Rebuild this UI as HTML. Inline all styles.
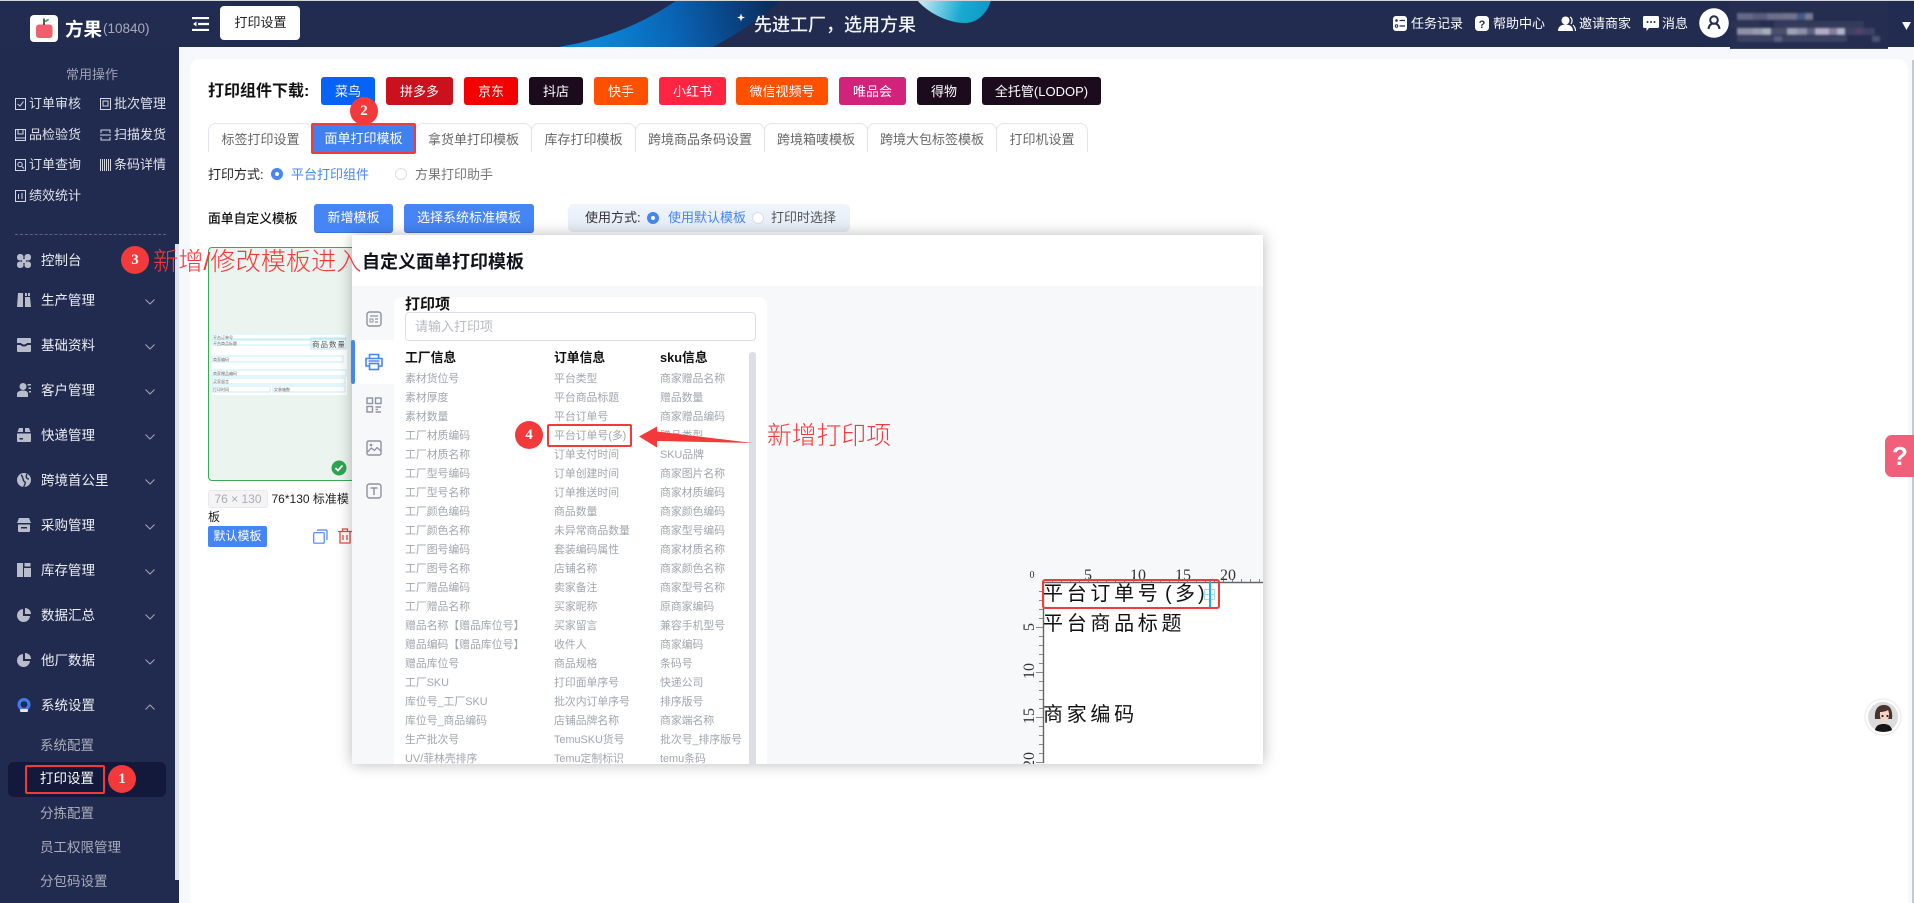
<!DOCTYPE html>
<html lang="zh-CN"><head><meta charset="utf-8"><title>打印设置</title>
<style>
html,body{margin:0;padding:0}
body{position:relative;width:1914px;height:903px;overflow:hidden;background:#f6f8fc;font-family:"Liberation Sans","Noto Sans CJK SC",sans-serif;font-size:13px;color:#333}
div,span,svg{box-sizing:border-box}
.a,svg.a{position:absolute}
.t{position:absolute;line-height:20px;white-space:nowrap}
.b{position:absolute;top:77px;height:28px;border-radius:3px;color:#fff;text-align:center;line-height:29px;font-size:13px}
.tab{position:absolute;top:123px;height:29px;border:1px solid #e2e5ec;border-bottom:none;border-radius:8px 8px 0 0;color:#666;text-align:center;line-height:32px;background:#fff}
.s{color:#dfe1e8;font-size:13px}
.m{color:#eceef3;font-size:13.5px;left:41px}
.sub{color:#a9adba;font-size:13.5px;left:40px}
.chev{position:absolute;left:145px;width:10px;height:6px}
.ico{position:absolute;left:17px;width:14px;height:14px}
.cir{position:absolute;width:28px;height:28px;border-radius:50%;background:#f33a3a;color:#fff;text-align:center;line-height:28px;font:bold 15px/28px "Liberation Serif",serif}
.col{position:absolute;top:370.2px;height:393.8px;overflow:hidden;font-size:10.85px;line-height:18.98px;color:#a1a5ae;white-space:nowrap}
.red{color:#f8383c;font-weight:300}
.rbtn{position:absolute;top:204px;height:28px;background:#4585f5;color:#fff;border-radius:3px;text-align:center;line-height:28px;box-shadow:0 1px 0 #3d74d8}
.radio{position:absolute;width:12px;height:12px;border-radius:50%}
.on{background:#fff;border:4px solid #4585f5}
.off{background:#fff;border:1px solid #dcdfe6}
.lab{position:absolute;font:20px/24px "Liberation Sans","Noto Sans CJK SC",sans-serif;color:#111;letter-spacing:3.7px;white-space:nowrap}
</style></head><body>

<!-- top bar -->
<div class="a" style="left:0;top:0;width:1914px;height:47px;background:#222c50;border-top:1px solid #d5d6da"></div>
<svg class="a" style="left:540px;top:1px" width="480" height="46" viewBox="540 1 480 46">
<defs><linearGradient id="g1" x1="600" y1="47" x2="770" y2="0" gradientUnits="userSpaceOnUse"><stop offset="0" stop-color="#0b86d8"/><stop offset=".45" stop-color="#0a63b4"/><stop offset="1" stop-color="#0b2c5e"/></linearGradient>
<linearGradient id="g2" x1="917" y1="0" x2="990" y2="20" gradientUnits="userSpaceOnUse"><stop offset="0" stop-color="#d2eef6"/><stop offset=".6" stop-color="#19aad0"/><stop offset="1" stop-color="#0b98c4"/></linearGradient></defs>
<path d="M559 47C600 40 640 26 677 0L780 0C760 20 735 35 713 47Z" fill="url(#g1)"/>
<path d="M917 0C930 15 950 23 965 23C978 23 988 12 991 0Z" fill="url(#g2)"/>
<path d="M741 13.500L742 16.500L745 17.500L742 18.500L741 21.500L740 18.500L737 17.500L740 16.500Z" fill="#fff"/>
</svg>
<div class="t" style="left:754px;top:13px;line-height:24px;font-size:18px;font-weight:500;color:#f2f4f8">先进工厂，选用方果</div>

<svg class="a" style="left:30px;top:15px" width="28" height="27" viewBox="0 0 28 27"><rect width="28" height="27" rx="4" fill="#fff"/><rect x="6" y="9.500" width="16.500" height="13.500" rx="3" fill="#ef5f6c"/><path d="M14 3.500V10" stroke="#333" stroke-width="1.600"/><path d="M14.500 7C15 5 17 4 19 4C18.500 6 17 7 14.500 7Z" fill="#3aa655"/></svg>
<div class="t" style="left:65px;top:18px;line-height:24px;font-size:18.500px;font-weight:bold;color:#fff">方果</div>
<div class="t" style="left:103px;top:19px;line-height:20px;font-size:13.500px;color:#a7abb9">(10840)</div>

<svg class="a" style="left:192px;top:17px" width="17" height="14" viewBox="0 0 17 14"><path d="M0 1H17M6 7H17M0 13H17" stroke="#fff" stroke-width="2.200"/><path d="M4.500 4.500L1 7L4.500 9.500Z" fill="#fff"/></svg>
<div class="a" style="left:220px;top:6px;width:80px;height:34px;background:#fff;border-radius:4px;text-align:center;line-height:34px;color:#222;padding-left:1px">打印设置</div>

<svg class="a" style="left:1393px;top:16px" width="14" height="15" viewBox="0 0 14 15"><rect width="14" height="15" rx="3" fill="#fff"/><path d="M6.500 4.500H12M6.500 10H12" stroke="#222c50" stroke-width="1.200"/><circle cx="3.500" cy="4.500" r="1.300" fill="#222c50"/><circle cx="3.500" cy="10" r="1.300" fill="none" stroke="#222c50"/></svg>
<div class="t" style="left:1411px;top:14px;color:#fff">任务记录</div>
<svg class="a" style="left:1475px;top:16px" width="14" height="15" viewBox="0 0 14 15"><rect width="14" height="15" rx="3.500" fill="#fff"/><text x="7" y="12" text-anchor="middle" font-size="11" font-weight="bold" fill="#222c50" font-family="Liberation Sans,sans-serif">?</text></svg>
<div class="t" style="left:1493px;top:14px;color:#fff">帮助中心</div>
<svg class="a" style="left:1558px;top:16px" width="18" height="15" viewBox="0 0 18 15"><circle cx="7.500" cy="4.500" r="4" fill="#fff"/><path d="M0 15C0 10 4 8.500 7.500 8.500C11 8.500 15 10 15 15Z" fill="#fff"/><path d="M12 1C14 2 15 5 13 8M15 9C16.500 10.500 17.500 12.500 17.500 15" stroke="#fff" fill="none" stroke-width="1.200"/></svg>
<div class="t" style="left:1579px;top:14px;color:#fff">邀请商家</div>
<svg class="a" style="left:1643px;top:16px" width="16" height="15" viewBox="0 0 16 15"><path d="M1.500 0H14.500Q16 0 16 1.500V10.500Q16 12 14.500 12H6L3.500 15V12H1.500Q0 12 0 10.500V1.500Q0 0 1.500 0Z" fill="#fff"/><circle cx="4.500" cy="6" r="1" fill="#222c50"/><circle cx="8" cy="6" r="1" fill="#222c50"/><circle cx="11.500" cy="6" r="1" fill="#222c50"/></svg>
<div class="t" style="left:1662px;top:14px;color:#fff">消息</div>
<svg class="a" style="left:1699px;top:8px" width="30" height="30" viewBox="0 0 30 30"><circle cx="15" cy="15" r="14.800" fill="#fff"/><circle cx="15" cy="12" r="3.800" fill="none" stroke="#222c50" stroke-width="2"/><path d="M9.500 21C10 17 12 15.500 15 15.500C18 15.500 20 17 20.500 21" fill="none" stroke="#222c50" stroke-width="2"/></svg>

<div class="a" style="left:1730px;top:1px;width:158px;height:48px;background:#252e50;border-bottom:1px solid #3a4363;overflow:hidden">
<svg class="a" style="left:0;top:0;filter:blur(1px)" width="158" height="47" viewBox="0 0 158 47">
<rect x="7" y="12" width="16" height="7" fill="#66688a"/><rect x="23" y="12" width="14" height="7" fill="#5a5c7e"/><rect x="37" y="12" width="16" height="7" fill="#6c6e8a"/><rect x="53" y="12" width="14" height="7" fill="#72728c"/><rect x="67" y="12" width="8" height="7" fill="#43598a"/><rect x="75" y="12" width="8" height="7" fill="#7a7a90"/>
<rect y="20" width="30" height="7" fill="#2c3454"/><rect x="44" y="20" width="90" height="7" fill="#343b5a"/>
<rect x="7" y="27" width="16" height="7" fill="#8f90a5"/><rect x="23" y="27" width="10" height="7" fill="#9a9bae"/><rect x="33" y="27" width="8" height="7" fill="#a7b0bd"/><rect x="41" y="27" width="16" height="7" fill="#4a4f6c"/><rect x="57" y="27" width="10" height="7" fill="#9ea2b4"/><rect x="67" y="27" width="10" height="7" fill="#8d90a8"/><rect x="77" y="27" width="8" height="7" fill="#5d6180"/><rect x="85" y="27" width="14" height="7" fill="#b4aac6"/><rect x="99" y="27" width="8" height="7" fill="#8a7e9c"/><rect x="107" y="27" width="8" height="7" fill="#b0b5c8"/><rect x="115" y="27" width="30" height="7" fill="#3e4364"/><rect x="125" y="27" width="8" height="7" fill="#52406f"/>
<rect x="7" y="35" width="110" height="6" fill="#3c4262"/><rect x="44" y="35" width="8" height="6" fill="#5b6080"/><rect x="142" y="35" width="8" height="6" fill="#4c5272"/>
</svg></div>
<svg class="a" style="left:1902px;top:22px" width="9" height="8" viewBox="0 0 9 8"><path d="M0 0H9L4.500 8Z" fill="#fff"/></svg>

<!-- sidebar -->
<div class="a" style="left:0;top:47px;width:179px;height:856px;background:#212b50"></div>
<div class="a" style="left:175px;top:244px;width:4px;height:636px;background:#dfe2ea"></div>
<div class="t" style="left:66px;top:65px;color:#9da1b0">常用操作</div>

<svg class="a" style="left:15px;top:98px" width="11" height="12"><rect x=".5" y=".5" width="10" height="11" fill="none" stroke="#d5d7df"/><path d="M2.500 6L5 8L8.500 3.500" fill="none" stroke="#d5d7df"/></svg>
<div class="t s" style="left:29px;top:94px">订单审核</div>
<svg class="a" style="left:100px;top:98px" width="11" height="12"><rect x=".5" y=".5" width="10" height="11" fill="none" stroke="#d5d7df"/><rect x="3" y="3" width="5" height="5" fill="none" stroke="#d5d7df"/></svg>
<div class="t s" style="left:114px;top:94px">批次管理</div>
<svg class="a" style="left:15px;top:129px" width="11" height="12"><rect x=".5" y=".5" width="10" height="11" fill="none" stroke="#d5d7df"/><path d="M3 1V5H8V1M1 9H10" fill="none" stroke="#d5d7df"/></svg>
<div class="t s" style="left:29px;top:125px">品检验货</div>
<svg class="a" style="left:100px;top:129px" width="11" height="12"><path d="M1 4V1H10V4M1 8V11H10V8M0 6H11" fill="none" stroke="#d5d7df"/></svg>
<div class="t s" style="left:114px;top:125px">扫描发货</div>
<svg class="a" style="left:15px;top:159px" width="11" height="12"><rect x=".5" y=".5" width="10" height="11" fill="none" stroke="#d5d7df"/><circle cx="5" cy="5.500" r="2.200" fill="none" stroke="#d5d7df"/><path d="M7 7.500L9 9.500" stroke="#d5d7df"/></svg>
<div class="t s" style="left:29px;top:155px">订单查询</div>
<svg class="a" style="left:100px;top:159px" width="11" height="12"><path d="M.5 0V12M2.500 0V12M4.500 0V12M6.500 0V12M8.500 0V12M10.500 0V12" stroke="#d5d7df"/></svg>
<div class="t s" style="left:114px;top:155px">条码详情</div>
<svg class="a" style="left:15px;top:190px" width="11" height="12"><rect x=".5" y=".5" width="10" height="11" fill="none" stroke="#d5d7df"/><path d="M3.500 4V9M7 3V9" stroke="#d5d7df"/></svg>
<div class="t s" style="left:29px;top:186px">绩效统计</div>
<div class="a" style="left:15px;top:234px;width:151px;border-top:1px dashed #5c6480"></div>

<svg class="ico" style="top:254px" viewBox="0 0 14 14" fill="#b9bdc9"><rect x="0" y="0" width="6.500" height="6.500" rx="2.800"/><rect x="7.500" y="0" width="6.500" height="6.500" rx="2.800"/><rect x="0" y="7.500" width="6.500" height="6.500" rx="2.800"/><rect x="7.500" y="7.500" width="6.500" height="6.500" rx="2.800"/><rect x="5" y="5" width="4" height="4"/></svg>
<div class="t m" style="top:251px">控制台</div>
<svg class="ico" style="top:293px" viewBox="0 0 14 14" fill="#b9bdc9"><path d="M1 0H6V14H0ZM8 4H13L14 14H8ZM8 0H10V3H8ZM11 0H13V3H11Z"/></svg>
<div class="t m" style="top:291px">生产管理</div>
<svg class="ico" style="top:338px" viewBox="0 0 14 14" fill="#b9bdc9"><path d="M1 0H13Q14 0 14 1V5H10C9 7 5 7 4 5H0V1Q0 0 1 0ZM0 7H3.500C5 9 9 9 10.500 7H14V13Q14 14 13 14H1Q0 14 0 13Z"/></svg>
<div class="t m" style="top:336px">基础资料</div>
<svg class="ico" style="top:383px" viewBox="0 0 14 14" fill="#b9bdc9"><circle cx="6" cy="3.500" r="3.500"/><path d="M0 14V11C0 8.500 3 7.500 6 7.500C9 7.500 11 8.500 11 11V14ZM10.500 1H14V2.500H10.500ZM11.500 4.500H14V6H11.500ZM12 8H14V9.500H12Z"/></svg>
<div class="t m" style="top:381px">客户管理</div>
<svg class="ico" style="top:428px" viewBox="0 0 14 14" fill="#b9bdc9"><path d="M2 0H6V4H0.500ZM8 0H12L13.500 4H8ZM0 5.500H14V13Q14 14 13 14H1Q0 14 0 13Z"/><path d="M2.500 10H6V11.500H2.500Z" fill="#212b50"/></svg>
<div class="t m" style="top:426px">快递管理</div>
<svg class="ico" style="top:473px" viewBox="0 0 14 14"><circle cx="7" cy="7" r="7" fill="#b9bdc9"/><path d="M4 2C7 4 5 8 8 9C9 11 7 13 6.500 14M10 1C8.500 4 9.500 6 12 6" stroke="#212b50" stroke-width="1.400" fill="none"/></svg>
<div class="t m" style="top:471px">跨境首公里</div>
<svg class="ico" style="top:518px" viewBox="0 0 14 14" fill="#b9bdc9"><path d="M2 0H12L14 5H0ZM1 6.500H13V13Q13 14 12 14H2Q1 14 1 13Z"/><rect x="4" y="9" width="6" height="1.500" fill="#212b50"/></svg>
<div class="t m" style="top:516px">采购管理</div>
<svg class="ico" style="top:563px" viewBox="0 0 14 14" fill="#b9bdc9"><rect x="0" y="0" width="6" height="14"/><rect x="7" y="5" width="7" height="9"/><rect x="7.500" y="0" width="6" height="3.500"/></svg>
<div class="t m" style="top:561px">库存管理</div>
<svg class="ico" style="top:608px" viewBox="0 0 14 14" fill="#b9bdc9"><path d="M6 1A6.500 6.500 0 1 0 13 8H6Z"/><path d="M8 0A6 6 0 0 1 14 6H8Z"/></svg>
<div class="t m" style="top:606px">数据汇总</div>
<svg class="ico" style="top:653px" viewBox="0 0 14 14" fill="#b9bdc9"><path d="M6 1A6.500 6.500 0 1 0 13 8H6Z"/><path d="M8 0A6 6 0 0 1 14 6H8Z"/></svg>
<div class="t m" style="top:651px">他厂数据</div>
<svg class="ico" style="top:698px" viewBox="0 0 14 14"><circle cx="7" cy="6.500" r="6.500" fill="#3f7de8"/><circle cx="7" cy="6.500" r="3.400" fill="#212b50"/><rect x="3" y="11" width="8" height="3" rx="1" fill="#e5e8f0"/></svg>
<div class="t m" style="top:696px">系统设置</div>

<svg class="chev" style="top:299px" viewBox="0 0 10 6"><path d="M.5.500L5 5L9.500.5" fill="none" stroke="#a4a8b6"/></svg>
<svg class="chev" style="top:344px" viewBox="0 0 10 6"><path d="M.5.500L5 5L9.500.5" fill="none" stroke="#a4a8b6"/></svg>
<svg class="chev" style="top:389px" viewBox="0 0 10 6"><path d="M.5.500L5 5L9.500.5" fill="none" stroke="#a4a8b6"/></svg>
<svg class="chev" style="top:434px" viewBox="0 0 10 6"><path d="M.5.500L5 5L9.500.5" fill="none" stroke="#a4a8b6"/></svg>
<svg class="chev" style="top:479px" viewBox="0 0 10 6"><path d="M.5.500L5 5L9.500.5" fill="none" stroke="#a4a8b6"/></svg>
<svg class="chev" style="top:524px" viewBox="0 0 10 6"><path d="M.5.500L5 5L9.500.5" fill="none" stroke="#a4a8b6"/></svg>
<svg class="chev" style="top:569px" viewBox="0 0 10 6"><path d="M.5.500L5 5L9.500.5" fill="none" stroke="#a4a8b6"/></svg>
<svg class="chev" style="top:614px" viewBox="0 0 10 6"><path d="M.5.500L5 5L9.500.5" fill="none" stroke="#a4a8b6"/></svg>
<svg class="chev" style="top:659px" viewBox="0 0 10 6"><path d="M.5.500L5 5L9.500.5" fill="none" stroke="#a4a8b6"/></svg>
<svg class="chev" style="top:704px" viewBox="0 0 10 6"><path d="M.5 5.500L5 1L9.500 5.500" fill="none" stroke="#a4a8b6"/></svg>

<div class="t sub" style="top:736px">系统配置</div>
<div class="a" style="left:8px;top:762px;width:158px;height:35px;background:#12193a;border-radius:6px"></div>
<div class="t sub" style="top:769px;color:#fff">打印设置</div>
<div class="a" style="left:25px;top:765px;width:80px;height:29px;border:2px solid #f33a3a;border-radius:2px"></div>
<div class="cir" style="left:108px;top:765px">1</div>
<div class="t sub" style="top:804px">分拣配置</div>
<div class="t sub" style="top:838px">员工权限管理</div>
<div class="t sub" style="top:872px">分包码设置</div>

<!-- card -->
<div class="a" style="left:190px;top:59px;width:1718px;height:844px;background:#fff;border-radius:10px 10px 0 0"></div>
<div class="a" style="left:1912px;top:60px;width:2px;height:843px;background:#c6c8cf"></div>
<div class="t" style="left:208px;top:82px;font-size:16px;font-weight:bold;color:#111">打印组件下载:</div>
<div class="b" style="left:321px;width:54px;background:#0763f5">菜鸟</div>
<div class="b" style="left:386px;width:67px;background:#cc111e">拼多多</div>
<div class="b" style="left:464px;width:54px;background:#f40000">京东</div>
<div class="b" style="left:529px;width:54px;background:#1b0b1c">抖店</div>
<div class="b" style="left:594px;width:54px;background:#ff5000">快手</div>
<div class="b" style="left:659px;width:67px;background:#ff2442">小红书</div>
<div class="b" style="left:736px;width:92px;background:#ff5000">微信视频号</div>
<div class="b" style="left:839px;width:67px;background:#d2237c">唯品会</div>
<div class="b" style="left:917px;width:54px;background:#1b0b1c">得物</div>
<div class="b" style="left:982px;width:119px;background:#1b0b1c">全托管(LODOP)</div>

<div class="tab" style="left:208px;width:105px">标签打印设置</div>
<div class="tab" style="left:415px;width:117px">拿货单打印模板</div>
<div class="tab" style="left:531px;width:105px">库存打印模板</div>
<div class="tab" style="left:635px;width:130px">跨境商品条码设置</div>
<div class="tab" style="left:764px;width:104px">跨境箱唛模板</div>
<div class="tab" style="left:867px;width:130px">跨境大包标签模板</div>
<div class="tab" style="left:996px;width:92px">打印机设置</div>
<div class="a" style="left:311px;top:123px;width:105px;height:31px;background:#4080f0;border:2px solid #f33a3a;border-radius:2px;color:#fff;text-align:center;line-height:27px">面单打印模板</div>
<div class="cir" style="left:350px;top:97px">2</div>

<div class="t" style="left:208px;top:165px;color:#222">打印方式:</div>
<div class="radio on" style="left:271px;top:168px"></div>
<div class="t" style="left:291px;top:165px;color:#4585f5">平台打印组件</div>
<div class="radio off" style="left:395px;top:168px"></div>
<div class="t" style="left:415px;top:165px;color:#777">方果打印助手</div>

<div class="t" style="left:208px;top:209px;color:#111;font-size:12.800px;font-weight:500">面单自定义模板</div>
<div class="rbtn" style="left:314px;width:79px">新增模板</div>
<div class="rbtn" style="left:404px;width:130px">选择系统标准模板</div>
<div class="a" style="left:568px;top:204px;width:282px;height:28px;background:linear-gradient(#eff5fd,#e6ecf6);border-radius:5px"></div>
<div class="t" style="left:585px;top:208px;color:#333">使用方式:</div>
<div class="radio on" style="left:647px;top:212px"></div>
<div class="t" style="left:668px;top:208px;color:#4585f5">使用默认模板</div>
<div class="radio off" style="left:752px;top:212px"></div>
<div class="t" style="left:771px;top:208px;color:#555">打印时选择</div>

<!-- template card -->
<div class="a" style="left:208px;top:247px;width:150px;height:234px;background:#ebf4ee;border:1px solid #3aa956;border-radius:4px"></div>
<svg class="a" style="left:211px;top:333px" width="137" height="62" viewBox="0 0 137 62">
<rect width="136" height="62" fill="#fff"/>
<g fill="none" stroke="#c6eef8"><rect x="1" y="1" width="134" height="5"/><rect x="1" y="7" width="134" height="5"/><rect x="100" y="5" width="35" height="11" stroke="#b9e3f2"/><rect x="1" y="23" width="131" height="6"/><rect x="1" y="37" width="134" height="6"/><rect x="1" y="45" width="133" height="6"/><rect x="1" y="53" width="58" height="6"/><rect x="62" y="53" width="72" height="6"/></g>
<g font-size="4" fill="#666" font-family="Liberation Sans,Noto Sans CJK SC,sans-serif"><text x="2" y="6">平台订单号</text><text x="2" y="12">平台商品标题</text><text x="2" y="28">商家编码</text><text x="2" y="42">商家赠品编码</text><text x="2" y="50">买家留言</text><text x="2" y="58">打印时间</text><text x="63" y="58">实装箱数</text></g>
<text x="101" y="14" font-size="7.500" letter-spacing="1" fill="#555" font-family="Liberation Sans,Noto Sans CJK SC,sans-serif">商品数量</text></svg>
<svg class="a" style="left:331px;top:460px" width="16" height="16" viewBox="0 0 16 16"><circle cx="8" cy="8" r="7.500" fill="#2ea44f"/><path d="M4.500 8L7 10.500L11.500 5.500" fill="none" stroke="#fff" stroke-width="1.800"/></svg>
<div class="a" style="left:208px;top:490px;width:60px;height:18px;background:#f4f4f5;border:1px solid #e9e9eb;border-radius:3px;color:#a9acb3;font-size:12px;text-align:center;line-height:16px">76 × 130</div>
<div class="t" style="left:271.500px;top:489px;font-size:12px;color:#222">76*130 标准模</div>
<div class="t" style="left:208px;top:507px;font-size:12px;color:#222">板</div>
<div class="a" style="left:208px;top:526px;width:59px;height:21px;background:#4585f5;border-radius:2px;color:#fff;font-size:12px;text-align:center;line-height:21px">默认模板</div>
<svg class="a" style="left:313px;top:529px" width="15" height="15" viewBox="0 0 15 15"><rect x=".7" y="3.700" width="10.500" height="10.500" rx="1" fill="#fff" stroke="#4585f5" stroke-width="1.200"/><path d="M4 1H13Q14 1 14 2V11" fill="none" stroke="#4585f5" stroke-width="1.200"/></svg>
<svg class="a" style="left:338px;top:528px" width="14" height="16" viewBox="0 0 14 16"><path d="M0 3.500H14M4.500 3V1H9.500V3M2 4V15H12V4M5 7V12M9 7V12" fill="none" stroke="#e24a3c" stroke-width="1.300"/></svg>

<!-- modal -->
<div class="a" style="left:352px;top:235px;width:911px;height:529px;background:#f7f8fa;box-shadow:0 0 14px rgba(0,0,0,.28)"></div>
<div class="a" style="left:352px;top:235px;width:911px;height:51px;background:#fff"></div>
<div class="t" style="left:362px;top:250px;line-height:24px;font-size:18px;font-weight:bold;color:#12131c">自定义面单打印模板</div>
<div class="a" style="left:394px;top:297px;width:373px;height:467px;background:#fff;border-radius:8px 8px 0 0"></div>
<div class="a" style="left:355px;top:340px;width:39px;height:44px;background:#fff"></div>
<div class="a" style="left:351px;top:340px;width:4px;height:44px;background:#4585f5;border-radius:2px"></div>
<svg class="a" style="left:366px;top:311px" width="16" height="16" viewBox="0 0 16 16"><rect x="1" y="1" width="14" height="14" rx="2.500" fill="none" stroke="#8d93a3" stroke-width="1.400"/><path d="M4 5H12M9 8H12M9 11H12" stroke="#8d93a3" stroke-width="1.300"/><rect x="4" y="8" width="3" height="3" fill="none" stroke="#8d93a3"/></svg>
<svg class="a" style="left:365px;top:353px" width="18" height="18" viewBox="0 0 18 18"><path d="M4.500 5V1.500H13.500V5M4.500 13H1V5.500H17V13H13.500" fill="none" stroke="#4585f5" stroke-width="1.600"/><rect x="4.500" y="10.500" width="9" height="6" fill="none" stroke="#4585f5" stroke-width="1.600"/><path d="M3.500 8H14.500" stroke="#4585f5" stroke-width="1.400"/></svg>
<svg class="a" style="left:366px;top:397px" width="16" height="16" viewBox="0 0 16 16"><g fill="none" stroke="#8d93a3" stroke-width="1.400"><rect x="1" y="1" width="5.500" height="5.500"/><rect x="9.500" y="1" width="5.500" height="5.500"/><rect x="1" y="9.500" width="5.500" height="5.500"/><path d="M9.500 10H15M9.500 12.500H12M9.500 15H15"/></g></svg>
<svg class="a" style="left:366px;top:440px" width="16" height="16" viewBox="0 0 16 16"><rect x="1" y="1" width="14" height="14" rx="1.500" fill="none" stroke="#8d93a3" stroke-width="1.400"/><path d="M1.500 12L5.500 8L8.500 10.500L11 7.500L15 11" fill="none" stroke="#8d93a3" stroke-width="1.300"/><circle cx="5" cy="5" r="1.300" fill="#8d93a3"/></svg>
<svg class="a" style="left:366px;top:483px" width="16" height="16" viewBox="0 0 16 16"><rect x="1" y="1" width="14" height="14" rx="2.500" fill="none" stroke="#8d93a3" stroke-width="1.400"/><path d="M4.500 5H11.500M8 5V12" stroke="#8d93a3" stroke-width="1.500"/></svg>

<div class="t" style="left:405px;top:295px;font-size:15px;font-weight:bold;color:#111">打印项</div>
<div class="a" style="left:405px;top:312px;width:351px;height:29px;background:#fff;border:1px solid #dcdfe6;border-radius:4px;color:#b7bac1;line-height:27px;padding-left:9px">请输入打印项</div>
<div class="t" style="left:405px;top:348px;font-weight:bold;color:#111;font-size:12.800px">工厂信息</div>
<div class="t" style="left:554px;top:348px;font-weight:bold;color:#111;font-size:12.800px">订单信息</div>
<div class="t" style="left:660px;top:348px;font-weight:bold;color:#111;font-size:12.800px">sku信息</div>
<div class="a" style="left:749px;top:352px;width:7px;height:412px;background:#dcdfe8;border-radius:3px 3px 0 0"></div>

<div class="col" style="left:405px"><div>素材货位号</div><div>素材厚度</div><div>素材数量</div><div>工厂材质编码</div><div>工厂材质名称</div><div>工厂型号编码</div><div>工厂型号名称</div><div>工厂颜色编码</div><div>工厂颜色名称</div><div>工厂图号编码</div><div>工厂图号名称</div><div>工厂赠品编码</div><div>工厂赠品名称</div><div>赠品名称【赠品库位号】</div><div>赠品编码【赠品库位号】</div><div>赠品库位号</div><div>工厂SKU</div><div>库位号_工厂SKU</div><div>库位号_商品编码</div><div>生产批次号</div><div>UV/菲林壳排序</div></div>
<div class="col" style="left:554px"><div>平台类型</div><div>平台商品标题</div><div>平台订单号</div><div>平台订单号(多)</div><div>订单支付时间</div><div>订单创建时间</div><div>订单推送时间</div><div>商品数量</div><div>未异常商品数量</div><div>套装编码属性</div><div>店铺名称</div><div>卖家备注</div><div>买家昵称</div><div>买家留言</div><div>收件人</div><div>商品规格</div><div>打印面单序号</div><div>批次内订单序号</div><div>店铺品牌名称</div><div>TemuSKU货号</div><div>Temu定制标识</div></div>
<div class="col" style="left:660px"><div>商家赠品名称</div><div>赠品数量</div><div>商家赠品编码</div><div>赠品类型</div><div>SKU品牌</div><div>商家图片名称</div><div>商家材质编码</div><div>商家颜色编码</div><div>商家型号编码</div><div>商家材质名称</div><div>商家颜色名称</div><div>商家型号名称</div><div>原商家编码</div><div>兼容手机型号</div><div>商家编码</div><div>条码号</div><div>快递公司</div><div>排序版号</div><div>商家端名称</div><div>批次号_排序版号</div><div>temu条码</div></div>

<!-- annotation 4 -->
<div class="a" style="left:547px;top:424px;width:85px;height:23px;border:2px solid #f33a3a;border-radius:2px"></div>
<div class="cir" style="left:515px;top:421px">4</div>
<svg class="a" style="left:635px;top:420px" width="125" height="32" viewBox="635 420 125 32"><path d="M639 436.500L657 426.500L657 431.500L753 443L657 441L657 447.500Z" fill="#f33a3a"/></svg>
<div class="t red" style="left:767px;top:421.500px;line-height:30px;font-size:24.800px">新增打印项</div>

<!-- canvas / ruler -->
<div class="a" style="left:1043px;top:582px;width:220px;height:182px;background:#fff"></div>
<svg class="a" style="left:1020px;top:560px" width="243" height="204" viewBox="1020 560 243 204">
<g stroke="#8a8a8a" stroke-width="1"><path d="M1052.500 579V582M1061.500 579V582M1070.500 579V582M1079.500 579V582M1097.500 579V582M1106.500 579V582M1115.500 579V582M1124.500 579V582M1142.500 579V582M1151.500 579V582M1160.500 579V582M1169.500 579V582M1187.500 579V582M1196.500 579V582M1205.500 579V582M1214.500 579V582M1232.500 579V582M1241.500 579V582M1250.500 579V582M1259.500 579V582"/>
<path d="M1088.500 577V582M1133.500 577V582M1178.500 577V582M1223.500 577V582"/>
<path d="M1039 591.500H1043M1039 600.500H1043M1039 609.500H1043M1039 618.500H1043M1039 636.500H1043M1039 645.500H1043M1039 654.500H1043M1039 663.500H1043M1039 681.500H1043M1039 690.500H1043M1039 699.500H1043M1039 708.500H1043M1039 726.500H1043M1039 735.500H1043M1039 744.500H1043M1039 753.500H1043"/>
<path d="M1036 627.500H1043M1036 672.500H1043M1036 717.500H1043M1036 762.500H1043"/></g>
<path d="M1043.500 763V582.500H1263" fill="none" stroke="#666" stroke-width="1.400"/>
<g font-family="Liberation Serif,serif" fill="#333" text-anchor="middle"><text x="1032" y="578" font-size="10">0</text><text x="1088" y="580" font-size="16">5</text><text x="1138" y="580" font-size="16">10</text><text x="1183" y="580" font-size="16">15</text><text x="1228" y="580" font-size="16">20</text>
<text transform="translate(1034 627) rotate(-90)" font-size="16">5</text><text transform="translate(1034 671) rotate(-90)" font-size="16">10</text><text transform="translate(1034 716) rotate(-90)" font-size="16">15</text><text transform="translate(1034 760) rotate(-90)" font-size="16">20</text></g>
</svg>
<div class="lab" style="left:1043px;top:582px">平台订单号</div>
<div class="lab" style="left:1165px;top:582px;letter-spacing:0;font-weight:300">(</div>
<div class="lab" style="left:1175px;top:582px;letter-spacing:0">多</div>
<div class="lab" style="left:1198px;top:582px;letter-spacing:0;font-weight:300">)</div>
<div class="lab" style="left:1043px;top:612px">平台商品标题</div>
<div class="lab" style="left:1043px;top:703px">商家编码</div>
<div class="a" style="left:1204px;top:589px;width:11px;height:11px;border:1px solid #9be0f7;background:linear-gradient(#9be0f7,#9be0f7) center/100% 1px no-repeat"></div>
<div class="a" style="left:1209px;top:581px;width:2px;height:26px;background:#19b6ee"></div>
<div class="a" style="left:1042px;top:579px;width:178px;height:30px;border:2px solid #f33a3a;border-radius:3px"></div>

<!-- annotation 3 -->
<div class="cir" style="left:121px;top:246px">3</div>
<div class="t red" style="left:153px;top:247px;line-height:30px;font-size:25.200px">新增/修改模板进入</div>

<!-- floating -->
<div class="a" style="left:1885px;top:435px;width:29px;height:42px;background:#f0607a;border-radius:7px 0 0 7px;color:#fff;font:bold 26px/42px 'Liberation Sans',sans-serif;padding-left:7px">?</div>
<svg class="a" style="left:1863px;top:697px" width="40" height="42" viewBox="0 0 40 42"><circle cx="20" cy="20" r="18" fill="#fff" stroke="#efefef" stroke-width="1.500"/><circle cx="20" cy="20" r="15" fill="#dcdcdc"/><path d="M12 22C11 11 16 8 21 8C27 8 30 13 29 22Z" fill="#4a332c"/><path d="M17 15C20 15 24 14 25 13C27 17 26.500 24 21 25C18 25 16.500 21 17 15Z" fill="#f7d3c8"/><circle cx="19.500" cy="19" r="1.100" fill="#222"/><circle cx="24.500" cy="19" r="1.100" fill="#222"/><path d="M12 33C13 28 17 27 20.500 27C24 27 28 28 29 33C25 35.500 16 35.500 12 33Z" fill="#161616"/></svg>

</body></html>
